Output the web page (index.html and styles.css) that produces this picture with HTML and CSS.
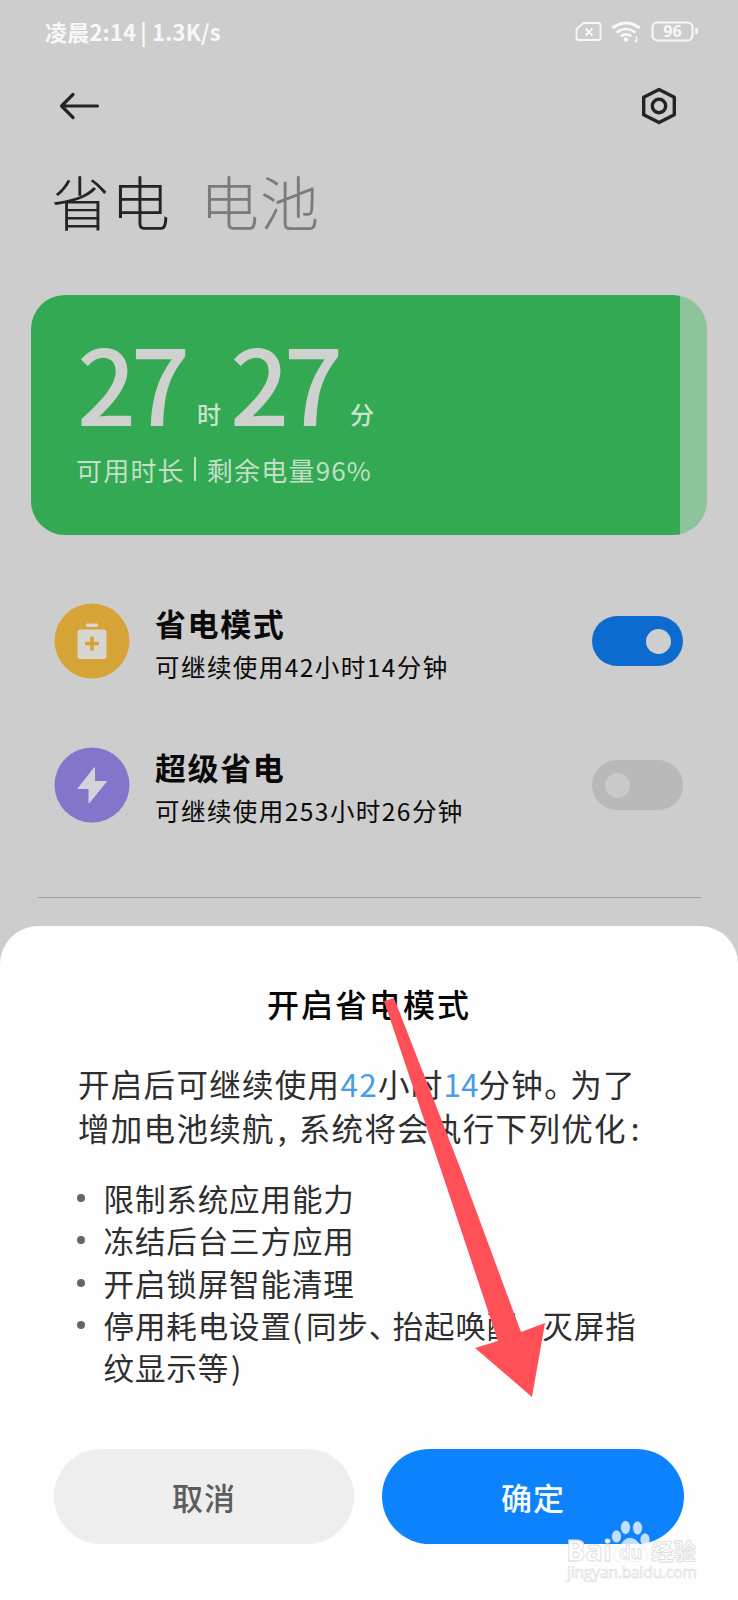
FILE: index.html
```html
<!DOCTYPE html>
<html lang="zh-CN">
<head>
<meta charset="utf-8">
<title>省电</title>
<link rel="stylesheet" href="styles.css">
</head>
<body>
<div class="screen">
  <header class="status">
    <div class="status-text">凌晨2:14<span class="status-bar">|</span>1.3K/s</div>
    <svg class="status-icons" width="130" height="30" viewBox="0 0 130 30" fill="none" stroke="#f8f8f8">
      <path d="M9.500 5h15q2 0 2 2v13q0 2-2 2h-20q-2 0-2-2v-9z" stroke-width="1.800" stroke-linejoin="round"/>
      <path d="M11.500 10.500l7 7m0-7l-7 7" stroke-width="1.800"/>
      <path d="M38.500 10q13.500-10 27 0" stroke-width="3"/>
      <path d="M42.500 14.500q9.500-7 19 0" stroke-width="2.600"/>
      <path d="M46.500 18.300q5.500-4 11 0" stroke-width="2.600"/>
      <circle cx="52" cy="21.500" r="2.200" fill="#f8f8f8" stroke="none"/>
      <path d="M62.500 18v6l-2-2" stroke-width="1.300"/>
      <rect x="78.500" y="4.500" width="40" height="18" rx="5" stroke-width="2.200"/>
      <path d="M122.500 10v6" stroke-width="2.500"/>
      <text class="battery-value" x="98.500" y="19.300" text-anchor="middle">96</text>
    </svg>
  </header>

  <nav class="toolbar">
    <svg width="44" height="40" viewBox="0 0 44 40" fill="none" stroke="#242424" stroke-width="3.200" stroke-linecap="round" stroke-linejoin="round">
      <path d="M39.500 20H3.500M15 8.500L3.500 20l11.500 11.500"/>
    </svg>
    <svg width="40" height="40" viewBox="0 0 40 40" fill="none" stroke="#242424" stroke-width="3.400" stroke-linejoin="round">
      <path d="M20 3.500L35.300 11.300V28.700L20 36.500L4.700 28.700V11.300z"/>
      <circle cx="20" cy="20" r="6.700"/>
    </svg>
  </nav>

  <div class="tabs">
    <span class="tab tab-active">省电</span>
    <span class="tab">电池</span>
  </div>

  <section class="card">
    <div class="time">
      <span class="num">27</span><span class="unit">时</span><span class="num">27</span><span class="unit unit-last">分</span>
    </div>
    <div class="remain">可用时长<span class="remain-bar"></span>剩余电量<span class="percent">96%</span></div>
  </section>

  <section class="modes">
    <div class="mode">
      <svg class="mode-icon" width="76" height="76" viewBox="0 0 76 76">
        <circle cx="38" cy="38" r="37.500" fill="#d6a436"/>
        <rect x="32" y="20.500" width="12" height="3.500" rx="1" fill="#d8d6d0"/>
        <rect x="23.500" y="26.500" width="29" height="29.500" rx="3" fill="#d8d6d0"/>
        <path d="M31 40.500h14M38 33.500v14" stroke="#d6a436" stroke-width="3.500"/>
      </svg>
      <div class="mode-body">
        <h2>省电模式</h2>
        <p>可继续使用42小时14分钟</p>
      </div>
      <span class="toggle toggle-on"><i></i></span>
    </div>
    <div class="mode">
      <svg class="mode-icon" width="76" height="76" viewBox="0 0 76 76">
        <circle cx="38" cy="38" r="37.500" fill="#8575ca"/>
        <path d="M40.500 20.500L24 41.500h11V56L52.500 34.500h-12z" fill="#d4d2da" stroke="#d4d2da" stroke-linejoin="round"/>
      </svg>
      <div class="mode-body">
        <h2>超级省电</h2>
        <p>可继续使用253小时26分钟</p>
      </div>
      <span class="toggle toggle-off"><i></i></span>
    </div>
  </section>
  <div class="divider"></div>

  <section class="sheet">
    <h1>开启省电模式</h1>
    <div class="desc">
      <div>开启后可继续使用<b>42</b>小时<b class="b14">14</b>分钟<span class="stop">。</span>为了</div>
      <div>增加电池续航<span class="comma">,</span>系统将会执行下列优化<span class="colon">:</span></div>
    </div>
    <ul class="list">
      <li>限制系统应用能力</li>
      <li>冻结后台三方应用</li>
      <li>开启锁屏智能清理</li>
      <li>停用耗电设置<span class="paren">(</span>同步<span class="pause">、</span>抬起唤醒<span class="pause">、</span>灭屏指<br>纹显示等<span class="paren paren-end">)</span></li>
    </ul>
    <div class="actions">
      <button class="btn btn-cancel">取消</button>
      <button class="btn btn-ok">确定</button>
    </div>
  </section>

  <svg class="arrow" width="80" height="402" viewBox="470 997 80 402">
    <path d="M384 1001L394 998L461 1170L521 1332L545 1323L532 1397L475 1348L498 1341L441 1170z" fill="#ff5058"/>
  </svg>

  <svg class="watermark" width="150" height="74" viewBox="0 0 150 74">
    <g class="wm-paw">
      <ellipse cx="56.500" cy="26.500" rx="4.500" ry="6"/>
      <ellipse cx="65.500" cy="17.500" rx="4.500" ry="6.500"/>
      <ellipse cx="77.500" cy="18" rx="4.500" ry="6.500"/>
      <ellipse cx="85" cy="29.500" rx="4.500" ry="6"/>
      <path d="M70 28c-7 0-8 7-13 10c-5 4-4 14 3 14q10-2 20 0c8 0 9-9 4-14c-5-3-7-10-14-10z"/>
    </g>
    <g class="wm-text">
      <text class="wm-logo" x="6" y="51" textLength="46" lengthAdjust="spacingAndGlyphs">Bai</text>
      <text class="wm-du" x="59" y="49">du</text>
      <text class="wm-cn" x="91" y="50">经验</text>
      <text class="wm-url" x="7" y="68" textLength="130">jingyan.baidu.com</text>
    </g>
  </svg>
</div>
</body>
</html>
```
FILE: styles.css
```css
* { box-sizing: border-box; margin: 0; padding: 0; }
body {
  width: 738px;
  height: 1600px;
  overflow: hidden;
  background: #cdcdcd;
  font-family: "Noto Sans CJK SC", sans-serif;
}
.screen {
  position: relative;
  display: flex;
  flex-direction: column;
  width: 738px;
  height: 1600px;
  overflow: hidden;
}
.status {
  display: flex;
  justify-content: space-between;
  height: 66px;
  padding: 0 34px 0 45px;
  align-items: center;
  color: #f8f8f8;
}
.status-text {
  font-size: 22px;
  font-weight: 700;
  line-height: 63px;
  height: 66px;
  letter-spacing: .2px;
  white-space: nowrap;
}
.status-bar { margin: 0 5px 0 4px; }
.status-icons { margin-top: 0; }
.battery-value { font: 700 16px "Noto Sans", sans-serif; fill: #f8f8f8; stroke: none; }

.toolbar {
  display: flex;
  justify-content: space-between;
  align-items: center;
  height: 80px;
  padding: 0 59px 0 58px;
}
.tabs {
  display: flex;
  gap: 29px;
  height: 149px;
  padding: 15px 0 0 51px;
}
.tab {
  font-size: 59px;
  line-height: 80px;
  font-weight: 300;
  letter-spacing: 1px;
  color: #7b7b7b;
}
.tab-active { color: #242424; }

.card {
  width: 676px;
  height: 240px;
  margin-left: 31px;
  padding: 26px 0 0 46px;
  border-radius: 34px;
  background: linear-gradient(90deg, #33a954 649px, #8fc39c 649px);
  color: #cfd1cf;
}
.time { display: flex; height: 120px; align-items: flex-end; }
.num {
  width: 120px;
  font-size: 104px;
  line-height: 120px;
  font-weight: 500;
  letter-spacing: -5.500px;
}
.unit { width: 33px; font-size: 24px; line-height: 54px; font-weight: 500; color: #cde3cf; }
.remain {
  display: flex;
  align-items: center;
  height: 48px;
  margin-top: 4px;
  margin-left: -1px;
  font-size: 26px;
  letter-spacing: 1.200px;
  color: #c3dfc7;
}
.remain-bar { width: 2px; height: 24px; margin: 0 11px 0 9px; background: #c3dfc7; }
.percent { letter-spacing: 1.100px; }

.modes { height: 362px; padding: 68px 55px 0 54px; }
.mode { display: flex; align-items: center; height: 76px; margin-bottom: 68px; }
.mode-body { flex: 1; padding: 8px 0 0 25px; color: #0a0a0a; }
.mode-body h2 { font-size: 31px; line-height: 44px; font-weight: 700; letter-spacing: 1.600px; }
.mode-body p { font-size: 24.500px; line-height: 44px; letter-spacing: 1.450px; }
.toggle {
  display: flex;
  align-items: center;
  width: 91px;
  height: 50px;
  padding: 0 12px;
  border-radius: 25px;
  background: #b9b9b9;
}
.toggle i { width: 25px; height: 25px; border-radius: 50%; background: #c9c9c9; }
.toggle-on { justify-content: flex-end; background: #0d6bd0; }
.toggle-on i { background: #cfcfcf; }
.toggle-off { padding-left: 13px; }
.divider { height: 1px; margin: 0 37px 28px 38px; background: #a0a0a0; }

.sheet {
  flex: 1;
  padding-top: 52px;
  border-radius: 38px 38px 0 0;
  background: #fefefe;
  color: #2e2e2e;
}
.sheet h1 {
  font-size: 32px;
  line-height: 50px;
  font-weight: 500;
  letter-spacing: 2px;
  text-align: center;
  color: #060606;
}
.desc {
  padding: 33px 0 0 78px;
  font-size: 31.500px;
  line-height: 44px;
  letter-spacing: 1.300px;
  white-space: nowrap;
}
.desc b { font-weight: 400; color: #4b9ce8; }
.desc .b14 { letter-spacing: 0; }
.stop, .comma, .paren, .pause { display: inline-block; }
.stop { width: 26px; }
.comma { width: 24px; padding-left: 3px; }
.colon { padding-left: 4px; }
.list {
  padding: 28px 0 0 103.500px;
  font-size: 30.500px;
  line-height: 42.300px;
  letter-spacing: .900px;
  white-space: nowrap;
  list-style: none;
}
.list li::before {
  content: "";
  float: left;
  width: 8px;
  height: 8px;
  margin: 17px 0 0 -26.500px;
  border-radius: 50%;
  background: #666;
}
.paren { width: 14px; }
.paren-end { padding-left: 2px; }
.pause { width: 24px; }
.actions { display: flex; gap: 28px; padding: 60.500px 0 0 54px; }
.btn {
  width: 300px;
  height: 95px;
  border: 0;
  border-radius: 48px;
  font: 500 31px "Noto Sans CJK SC", sans-serif;
  letter-spacing: 1px;
}
.btn-cancel { background: #eee; color: #5c5c5c; }
.btn-ok { width: 302px; background: #0d82fd; color: #f5fbff; }

.arrow { position: absolute; left: 470px; top: 997px; overflow: visible; }
.watermark { position: absolute; left: 560px; top: 1510px; }
.wm-paw { fill: #fff; fill-opacity: .75; stroke: #d5d5d5; stroke-opacity: .4; stroke-width: .8; }
.wm-text { fill: #fff; fill-opacity: .95; stroke: #dcdcdc; stroke-width: .8; font-family: "Open Sans", sans-serif; }
.wm-logo { font-size: 29px; font-weight: 700; }
.wm-du { font-size: 18px; font-weight: 700; }
.wm-cn { font: 700 22.500px "Noto Sans CJK SC", sans-serif; }
.wm-url { font-size: 16px; stroke-width: .6; }
```
